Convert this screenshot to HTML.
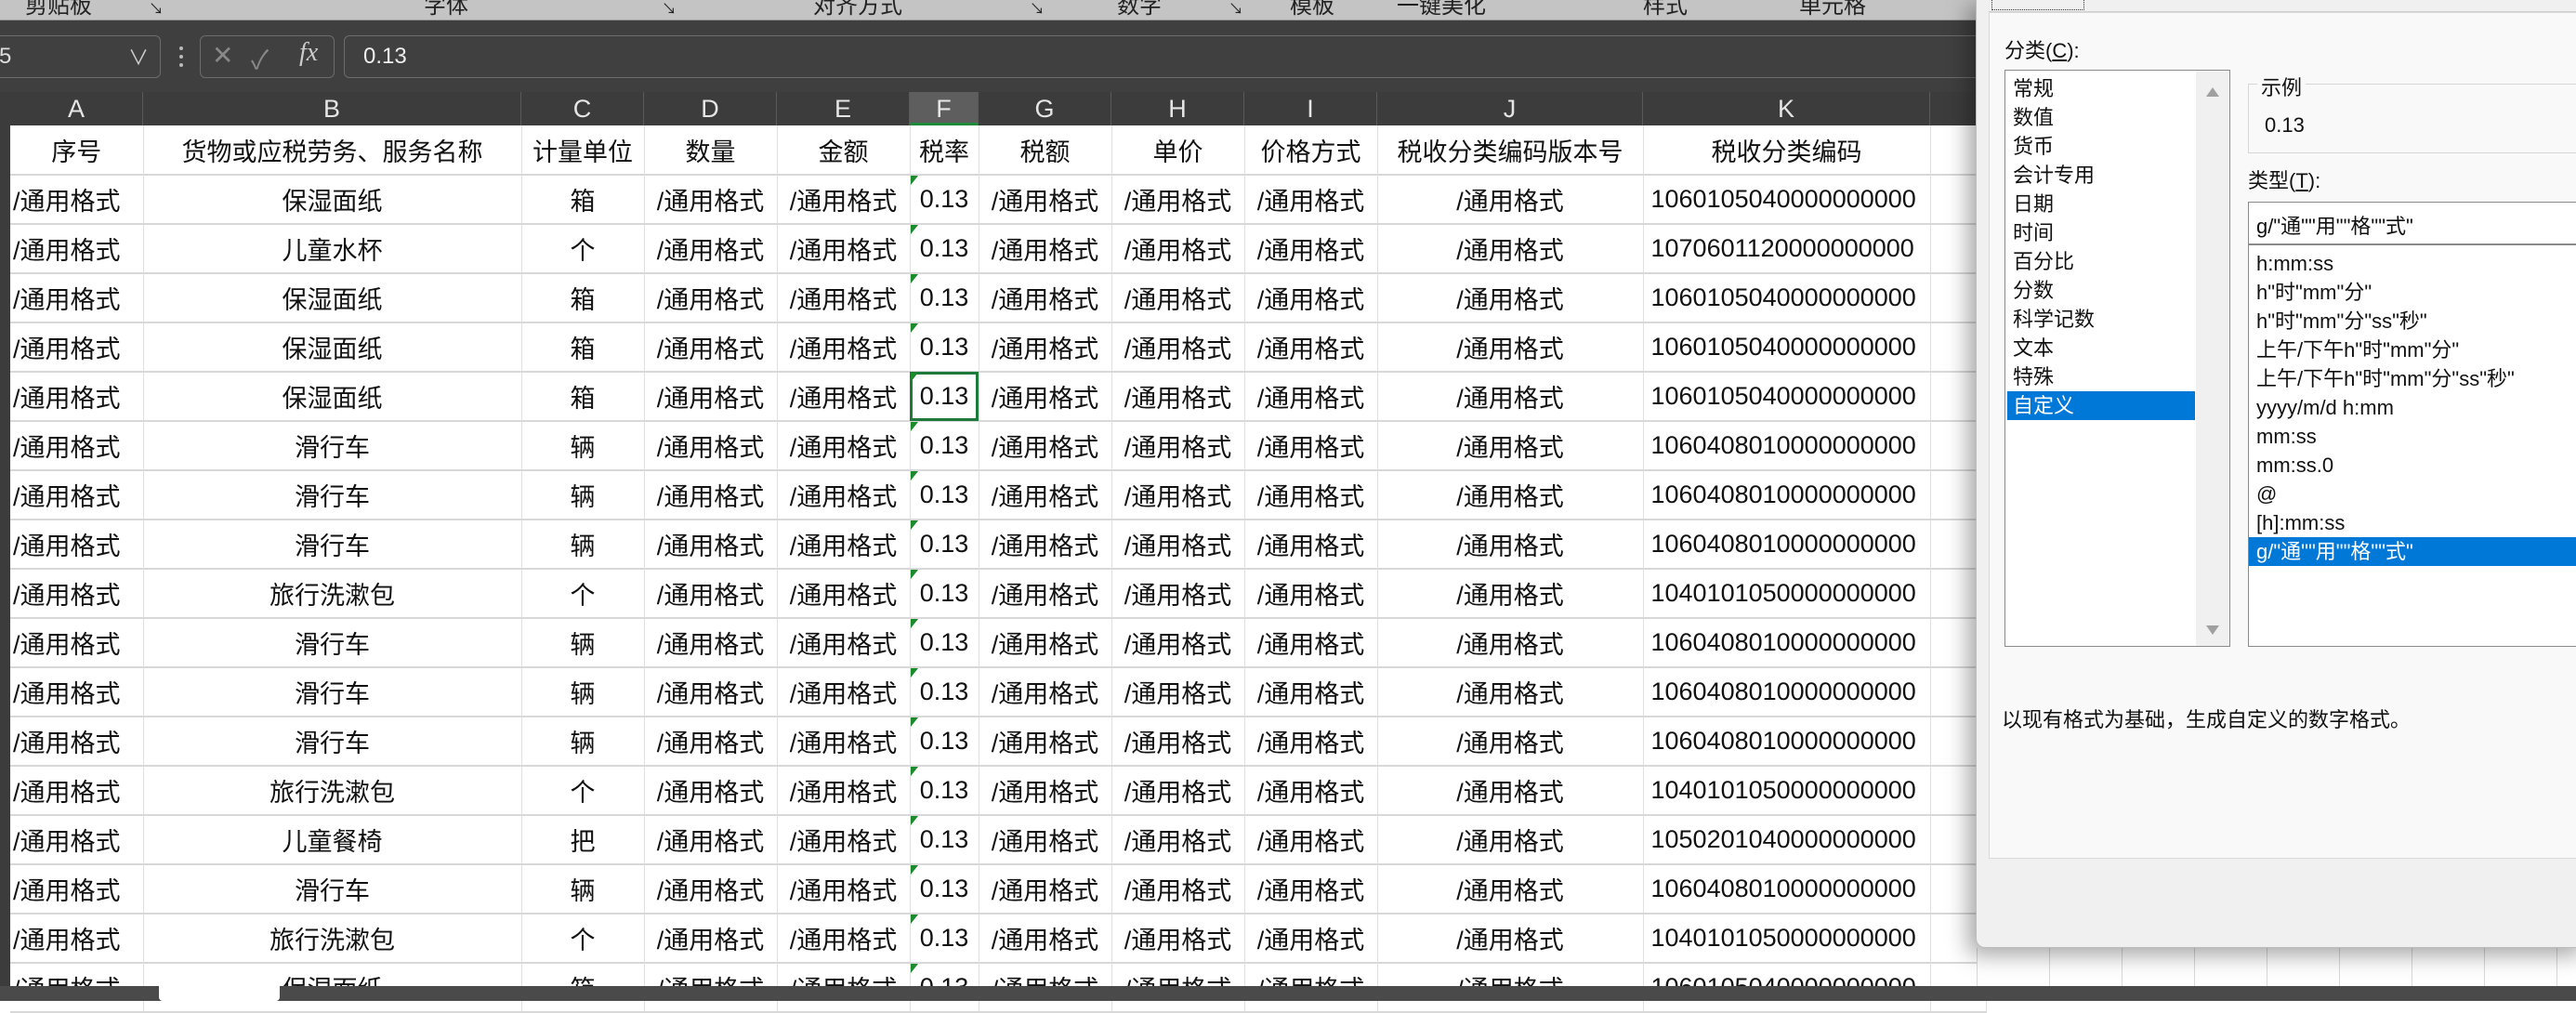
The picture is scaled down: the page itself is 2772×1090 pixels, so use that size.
<!DOCTYPE html>
<html><head><meta charset="utf-8">
<style>
*{margin:0;padding:0;box-sizing:border-box}
body{width:2772px;height:1077px;overflow:hidden;background:#fff;position:relative;font-family:"Liberation Sans","Noto Sans CJK SC",sans-serif}
.rib{position:absolute;left:0;top:0;width:2772px;height:22px;background:#c4c4c4;overflow:hidden;border-bottom:1px solid #9a9a9a}
.rib span{position:absolute;top:-14px;font-size:24px;color:#222}
.fb{position:absolute;left:0;top:22px;width:2772px;height:77px;background:#3f3f3f}
.box{position:absolute;border:1px solid #6c6c6c;border-radius:6px;background:#404040}
.ch{position:absolute;left:0;top:99px;width:2772px;height:36px;background:#3c3c3c}
.ch div{position:absolute;top:0;height:36px;line-height:36px;text-align:center;color:#e6e6e6;font-size:27px;border-right:1px solid #5a5a5a}
table{position:absolute;left:11px;top:135px;border-collapse:collapse;table-layout:fixed}
td{height:53px;border-right:1px solid #e0e0e0;border-bottom:2px solid #d8d8d8;font-size:27px;text-align:center;color:#111;white-space:nowrap;overflow:hidden;padding:0;position:relative}
td.a{text-align:left;padding-left:3px}
td.k{text-align:left;padding-left:8px}
td.f::before{content:"";position:absolute;left:0;top:0;border-top:10px solid #1a8a2a;border-right:8px solid transparent}
.left{position:absolute;left:0;top:99px;width:11px;height:962px;background:#3c3c3c}
.bot{position:absolute;left:0;top:1061px;width:2772px;height:16px;background:#4a4a4a}
.dlg{position:absolute;left:2126px;top:-2px;width:660px;height:1022px;background:#f0f0f0;border:1px solid #bdbdbd;border-radius:0 0 0 10px;box-shadow:-8px 8px 24px rgba(0,0,0,.35)}
.inner{position:absolute;left:13px;top:14px;width:660px;height:911px;background:#f9f9f9;border:1px solid #d9d9d9}
.t{position:absolute;font-size:22px;color:#111;white-space:nowrap}
.lst{position:absolute;background:#fff;border:1px solid #8a8a8a}
.it{position:absolute;left:8px;font-size:22px;line-height:31px;height:31px;white-space:nowrap;color:#111}
</style></head><body>
<div class="rib">
<span style="left:27px">剪贴板</span><span style="left:160px;font-size:16px;top:-4px">↘</span>
<span style="left:456px">字体</span><span style="left:712px;font-size:16px;top:-4px">↘</span>
<span style="left:875px">对齐方式</span><span style="left:1108px;font-size:16px;top:-4px">↘</span>
<span style="left:1202px">数字</span><span style="left:1322px;font-size:16px;top:-4px">↘</span>
<span style="left:1388px">模板</span>
<span style="left:1503px">一键美化</span>
<span style="left:1768px">样式</span>
<span style="left:1936px">单元格</span>
</div>
<div class="fb">
<div class="box" style="left:-10px;top:16px;width:183px;height:46px"><span style="position:absolute;left:8px;top:8px;color:#ddd;font-size:24px">5</span><span style="position:absolute;right:12px;top:6px;color:#ccc;font-size:22px">∨</span></div>
<div style="position:absolute;left:193px;top:28px;width:4px;height:22px;border-left:4px dotted #bbb"></div>
<div class="box" style="left:215px;top:16px;width:145px;height:46px;color:#888;font-size:28px"><span style="position:absolute;left:12px;top:4px">✕</span><span style="position:absolute;left:54px;top:4px">✓</span><span style="position:absolute;left:106px;top:2px;font-family:'Liberation Serif',serif;font-style:italic;color:#ccc">fx</span></div>
<div class="box" style="left:370px;top:16px;width:1800px;height:46px"><span style="position:absolute;left:20px;top:8px;color:#eee;font-size:24px">0.13</span></div>
</div>
<div class="ch">
<div style="left:0;width:11px;background:#e0e0e0"></div>
<div style="left:11px;width:143px">A</div><div style="left:154px;width:407px">B</div><div style="left:561px;width:132px">C</div><div style="left:693px;width:143px">D</div><div style="left:836px;width:143px">E</div><div style="left:979px;width:74px;background:#5e5e5e;border-bottom:3px solid #1e8a3a">F</div><div style="left:1053px;width:143px">G</div><div style="left:1196px;width:143px">H</div><div style="left:1339px;width:143px">I</div><div style="left:1482px;width:286px">J</div><div style="left:1768px;width:309px">K</div><div style="left:2077px;width:200px"></div>
</div>
<div class="left"></div>
<table>
<colgroup><col style="width:143px"><col style="width:407px"><col style="width:132px"><col style="width:143px"><col style="width:143px"><col style="width:74px"><col style="width:143px"><col style="width:143px"><col style="width:143px"><col style="width:286px"><col style="width:309px"><col style="width:60px"></colgroup>
<tr><td>序号</td><td>货物或应税劳务、服务名称</td><td>计量单位</td><td>数量</td><td>金额</td><td>税率</td><td>税额</td><td>单价</td><td>价格方式</td><td>税收分类编码版本号</td><td>税收分类编码</td><td></td></tr>
<tr><td class="a">/通用格式</td><td>保湿面纸</td><td>箱</td><td>/通用格式</td><td>/通用格式</td><td class="f">0.13</td><td>/通用格式</td><td>/通用格式</td><td>/通用格式</td><td>/通用格式</td><td class="k">1060105040000000000</td><td></td></tr>
<tr><td class="a">/通用格式</td><td>儿童水杯</td><td>个</td><td>/通用格式</td><td>/通用格式</td><td class="f">0.13</td><td>/通用格式</td><td>/通用格式</td><td>/通用格式</td><td>/通用格式</td><td class="k">1070601120000000000</td><td></td></tr>
<tr><td class="a">/通用格式</td><td>保湿面纸</td><td>箱</td><td>/通用格式</td><td>/通用格式</td><td class="f">0.13</td><td>/通用格式</td><td>/通用格式</td><td>/通用格式</td><td>/通用格式</td><td class="k">1060105040000000000</td><td></td></tr>
<tr><td class="a">/通用格式</td><td>保湿面纸</td><td>箱</td><td>/通用格式</td><td>/通用格式</td><td class="f">0.13</td><td>/通用格式</td><td>/通用格式</td><td>/通用格式</td><td>/通用格式</td><td class="k">1060105040000000000</td><td></td></tr>
<tr><td class="a">/通用格式</td><td>保湿面纸</td><td>箱</td><td>/通用格式</td><td>/通用格式</td><td class="f" style="outline:3px solid #1e7a3a;outline-offset:-3px">0.13</td><td>/通用格式</td><td>/通用格式</td><td>/通用格式</td><td>/通用格式</td><td class="k">1060105040000000000</td><td></td></tr>
<tr><td class="a">/通用格式</td><td>滑行车</td><td>辆</td><td>/通用格式</td><td>/通用格式</td><td class="f">0.13</td><td>/通用格式</td><td>/通用格式</td><td>/通用格式</td><td>/通用格式</td><td class="k">1060408010000000000</td><td></td></tr>
<tr><td class="a">/通用格式</td><td>滑行车</td><td>辆</td><td>/通用格式</td><td>/通用格式</td><td class="f">0.13</td><td>/通用格式</td><td>/通用格式</td><td>/通用格式</td><td>/通用格式</td><td class="k">1060408010000000000</td><td></td></tr>
<tr><td class="a">/通用格式</td><td>滑行车</td><td>辆</td><td>/通用格式</td><td>/通用格式</td><td class="f">0.13</td><td>/通用格式</td><td>/通用格式</td><td>/通用格式</td><td>/通用格式</td><td class="k">1060408010000000000</td><td></td></tr>
<tr><td class="a">/通用格式</td><td>旅行洗漱包</td><td>个</td><td>/通用格式</td><td>/通用格式</td><td class="f">0.13</td><td>/通用格式</td><td>/通用格式</td><td>/通用格式</td><td>/通用格式</td><td class="k">1040101050000000000</td><td></td></tr>
<tr><td class="a">/通用格式</td><td>滑行车</td><td>辆</td><td>/通用格式</td><td>/通用格式</td><td class="f">0.13</td><td>/通用格式</td><td>/通用格式</td><td>/通用格式</td><td>/通用格式</td><td class="k">1060408010000000000</td><td></td></tr>
<tr><td class="a">/通用格式</td><td>滑行车</td><td>辆</td><td>/通用格式</td><td>/通用格式</td><td class="f">0.13</td><td>/通用格式</td><td>/通用格式</td><td>/通用格式</td><td>/通用格式</td><td class="k">1060408010000000000</td><td></td></tr>
<tr><td class="a">/通用格式</td><td>滑行车</td><td>辆</td><td>/通用格式</td><td>/通用格式</td><td class="f">0.13</td><td>/通用格式</td><td>/通用格式</td><td>/通用格式</td><td>/通用格式</td><td class="k">1060408010000000000</td><td></td></tr>
<tr><td class="a">/通用格式</td><td>旅行洗漱包</td><td>个</td><td>/通用格式</td><td>/通用格式</td><td class="f">0.13</td><td>/通用格式</td><td>/通用格式</td><td>/通用格式</td><td>/通用格式</td><td class="k">1040101050000000000</td><td></td></tr>
<tr><td class="a">/通用格式</td><td>儿童餐椅</td><td>把</td><td>/通用格式</td><td>/通用格式</td><td class="f">0.13</td><td>/通用格式</td><td>/通用格式</td><td>/通用格式</td><td>/通用格式</td><td class="k">1050201040000000000</td><td></td></tr>
<tr><td class="a">/通用格式</td><td>滑行车</td><td>辆</td><td>/通用格式</td><td>/通用格式</td><td class="f">0.13</td><td>/通用格式</td><td>/通用格式</td><td>/通用格式</td><td>/通用格式</td><td class="k">1060408010000000000</td><td></td></tr>
<tr><td class="a">/通用格式</td><td>旅行洗漱包</td><td>个</td><td>/通用格式</td><td>/通用格式</td><td class="f">0.13</td><td>/通用格式</td><td>/通用格式</td><td>/通用格式</td><td>/通用格式</td><td class="k">1040101050000000000</td><td></td></tr>
<tr><td class="a">/通用格式</td><td>保湿面纸</td><td>箱</td><td>/通用格式</td><td>/通用格式</td><td class="f">0.13</td><td>/通用格式</td><td>/通用格式</td><td>/通用格式</td><td>/通用格式</td><td class="k">1060105040000000000</td><td></td></tr>
</table>
<div style="position:absolute;left:2127px;top:1020px;width:645px;height:41px;background:#fff;background-image:linear-gradient(90deg,#d8d8d8 1px,transparent 1px);background-size:78px 100%"></div>
<div class="bot"><div style="position:absolute;left:171px;top:-6px;width:130px;height:22px;background:#fff;border-radius:4px"></div></div>
<div class="dlg">
<div style="position:absolute;left:13px;top:0;width:660px;height:14px;border-bottom:1px solid #d0d0d0"></div>
<div style="position:absolute;left:16px;top:0;width:100px;height:12px;border:1px dotted #333;border-top:none"></div>
<div class="inner"></div>
<div class="t" style="left:30px;top:38px">分类(<u>C</u>):</div>
<div class="lst" style="left:30px;top:76px;width:243px;height:621px">
<div style="position:absolute;right:0;top:0;width:36px;height:100%;background:#f0f0f0"></div>
<div style="position:absolute;right:11px;top:18px;border-bottom:10px solid #a0a0a0;border-left:7px solid transparent;border-right:7px solid transparent"></div>
<div style="position:absolute;right:11px;bottom:12px;border-top:10px solid #a0a0a0;border-left:7px solid transparent;border-right:7px solid transparent"></div>
<div class="it" style="top:4px">常规</div><div class="it" style="top:35px">数值</div><div class="it" style="top:66px">货币</div><div class="it" style="top:97px">会计专用</div><div class="it" style="top:128px">日期</div><div class="it" style="top:159px">时间</div><div class="it" style="top:190px">百分比</div><div class="it" style="top:221px">分数</div><div class="it" style="top:252px">科学记数</div><div class="it" style="top:283px">文本</div><div class="it" style="top:314px">特殊</div>
<div class="it" style="top:345px;left:2px;width:202px;padding-left:6px;background:#0078d7;color:#fff">自定义</div>
</div>
<div style="position:absolute;left:292px;top:91px;width:400px;height:75px;border:1px solid #d6d6d6"></div>
<div class="t" style="left:302px;top:78px;background:#f9f9f9;padding:0 4px">示例</div>
<div class="t" style="left:310px;top:123px">0.13</div>
<div class="t" style="left:292px;top:178px">类型(<u>T</u>):</div>
<div style="position:absolute;left:292px;top:218px;width:400px;height:46px;background:#fff;border:1px solid #8a8a8a"><span class="t" style="left:8px;top:8px">g/"通""用""格""式"</span></div>
<div class="lst" style="left:292px;top:264px;width:400px;height:433px">
<div class="it" style="top:4px">h:mm:ss</div><div class="it" style="top:35px">h"时"mm"分"</div><div class="it" style="top:66px">h"时"mm"分"ss"秒"</div><div class="it" style="top:97px">上午/下午h"时"mm"分"</div><div class="it" style="top:128px">上午/下午h"时"mm"分"ss"秒"</div><div class="it" style="top:159px">yyyy/m/d h:mm</div><div class="it" style="top:190px">mm:ss</div><div class="it" style="top:221px">mm:ss.0</div><div class="it" style="top:252px">@</div><div class="it" style="top:283px">[h]:mm:ss</div>
<div class="it" style="top:314px;left:0;width:400px;padding-left:8px;background:#0078d7;color:#fff">g/"通""用""格""式"</div>
</div>
<div class="t" style="left:27px;top:758px">以现有格式为基础，生成自定义的数字格式。</div>
</div>
</body></html>
